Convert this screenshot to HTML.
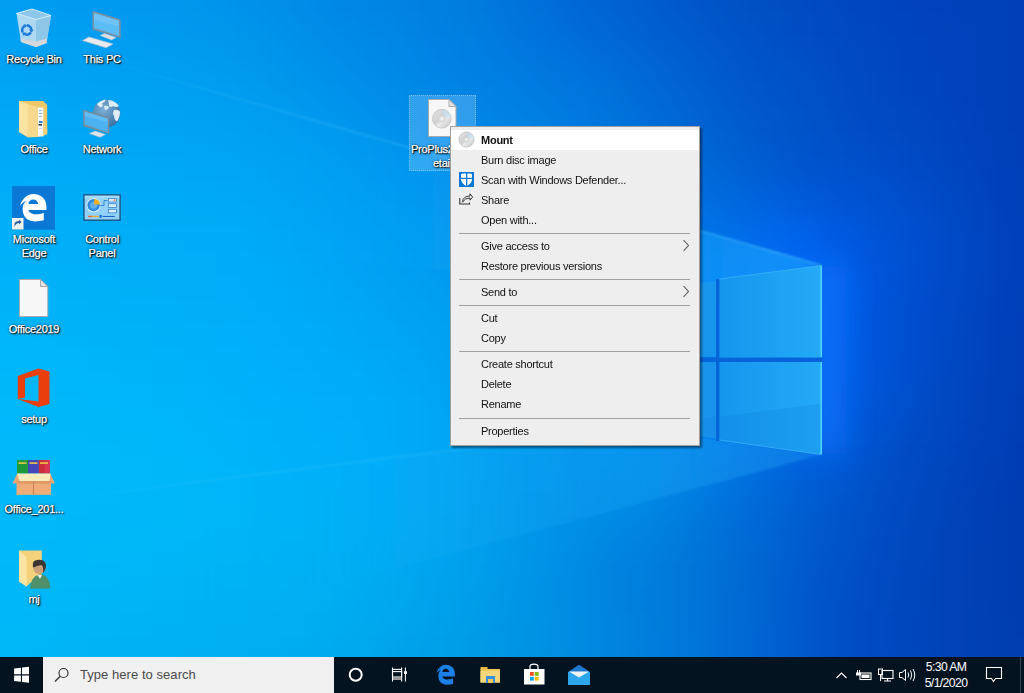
<!DOCTYPE html>
<html><head><meta charset="utf-8">
<style>
*{margin:0;padding:0;box-sizing:border-box}
html,body{width:1024px;height:693px;overflow:hidden;background:#0050c8}
body{position:relative;font-family:"Liberation Sans",sans-serif}
#wallwrap{position:absolute;left:0;top:0;width:1024px;height:657px;overflow:hidden}
#wall{position:absolute;left:0;top:0;width:1024px;height:657px}
#wf i{position:absolute;left:0;width:100%;height:12px;display:block}
.ic{position:absolute}
.lbl{position:absolute;color:#fff;font-size:11px;letter-spacing:-0.25px;text-align:center;line-height:14px;-webkit-text-stroke:0.25px #fff;
 text-shadow:1px 1px 1px #000,0 0 2px rgba(0,0,0,.85),1px 1px 3px rgba(0,0,0,.5)}
#menu{will-change:transform;position:absolute;left:450px;top:126px;width:250px;height:320px;background:#eeeeee;border:1px solid #a0a0a0;
 box-shadow:2px 2px 2px rgba(0,0,0,.45)}
.mi{position:absolute;left:0;width:248px;height:20px;font-size:11px;letter-spacing:-0.25px;color:#111;line-height:20px;padding-left:30px;white-space:nowrap}
.sep{position:absolute;left:8px;width:231px;height:1px;background:#a0a0a0}
.chev{position:absolute;right:10px;top:5px}
#task{position:absolute;left:0;top:657px;width:1024px;height:36px;background:#041320}
#search{position:absolute;left:43px;top:657px;width:291px;height:36px;background:#f0f0f0}
</style></head><body>
<div id="wallwrap">
<div id="wf" style="position:absolute;left:-24px;top:-24px;width:1072px;height:705px;filter:blur(6px)"><i style="top:0px;background:linear-gradient(90deg,#019ef2 0.0%,#019df1 3.0%,#009cf1 6.0%,#009bf0 9.0%,#009af0 11.9%,#0099ef 14.9%,#0097ee 17.9%,#0095ec 20.9%,#0093eb 23.9%,#0090e9 26.9%,#008ce8 29.9%,#0089e6 32.8%,#0086e5 35.8%,#0083e3 38.8%,#0080e1 41.8%,#007ddf 44.8%,#0078dd 47.8%,#0073da 50.7%,#006dd8 53.7%,#0067d5 56.7%,#0061d1 59.7%,#005dce 62.7%,#0058ca 65.7%,#0054c7 68.7%,#0050c4 71.6%,#004dc2 74.6%,#004ac1 77.6%,#0048bf 80.6%,#0046be 83.6%,#0044bd 86.6%,#0042bb 89.6%,#0041ba 92.5%,#003fb8 95.5%,#003eb6 98.5%)"></i><i style="top:12px;background:linear-gradient(90deg,#019ef2 0.0%,#019df1 3.0%,#009cf1 6.0%,#009bf0 9.0%,#009af0 11.9%,#0099ef 14.9%,#0097ee 17.9%,#0095ec 20.9%,#0093eb 23.9%,#0090e9 26.9%,#008ce8 29.9%,#0089e6 32.8%,#0086e5 35.8%,#0083e3 38.8%,#0080e1 41.8%,#007ddf 44.8%,#0078dd 47.8%,#0073da 50.7%,#006dd8 53.7%,#0067d5 56.7%,#0061d1 59.7%,#005dce 62.7%,#0058ca 65.7%,#0054c7 68.7%,#0050c4 71.6%,#004dc2 74.6%,#004ac1 77.6%,#0048bf 80.6%,#0046be 83.6%,#0044bd 86.6%,#0042bb 89.6%,#0041ba 92.5%,#003fb8 95.5%,#003eb6 98.5%)"></i><i style="top:24px;background:linear-gradient(90deg,#019ef2 0.0%,#019ef2 3.0%,#009cf1 6.0%,#009bf0 9.0%,#009af0 11.9%,#0099ef 14.9%,#0098ee 17.9%,#0096ed 20.9%,#0093eb 23.9%,#0090ea 26.9%,#008de8 29.9%,#0089e7 32.8%,#0086e5 35.8%,#0084e3 38.8%,#0081e1 41.8%,#007edf 44.8%,#0079dd 47.8%,#0073db 50.7%,#006dd8 53.7%,#0067d5 56.7%,#0062d2 59.7%,#005dce 62.7%,#0059cb 65.7%,#0055c7 68.7%,#0051c4 71.6%,#004ec2 74.6%,#004bc1 77.6%,#0048c0 80.6%,#0046be 83.6%,#0044bd 86.6%,#0042bb 89.6%,#0041ba 92.5%,#0040b8 95.5%,#003eb6 98.5%)"></i><i style="top:36px;background:linear-gradient(90deg,#019ff2 0.0%,#019ff2 3.0%,#009df1 6.0%,#009cf1 9.0%,#009bf0 11.9%,#009af0 14.9%,#0099ef 17.9%,#0097ed 20.9%,#0095ec 23.9%,#0092ea 26.9%,#008ee9 29.9%,#008ae7 32.8%,#0087e6 35.8%,#0085e4 38.8%,#0082e2 41.8%,#007ee0 44.8%,#007ade 47.8%,#0075dc 50.7%,#006fd9 53.7%,#0069d6 56.7%,#0063d3 59.7%,#005fcf 62.7%,#005acb 65.7%,#0056c8 68.7%,#0052c5 71.6%,#004fc3 74.6%,#004cc2 77.6%,#0049c0 80.6%,#0046bf 83.6%,#0044be 86.6%,#0043bc 89.6%,#0041ba 92.5%,#0040b8 95.5%,#003eb6 98.5%)"></i><i style="top:48px;background:linear-gradient(90deg,#01a0f3 0.0%,#01a0f2 3.0%,#009ff2 6.0%,#009ef1 9.0%,#009df1 11.9%,#009bf0 14.9%,#009aef 17.9%,#0098ee 20.9%,#0096ec 23.9%,#0093eb 26.9%,#008fe9 29.9%,#008ce8 32.8%,#0089e7 35.8%,#0086e5 38.8%,#0082e3 41.8%,#007fe1 44.8%,#007bdf 47.8%,#0076dd 50.7%,#0070da 53.7%,#006ad7 56.7%,#0065d4 59.7%,#0060d0 62.7%,#005ccc 65.7%,#0057c9 68.7%,#0053c6 71.6%,#004fc4 74.6%,#004cc3 77.6%,#0049c1 80.6%,#0047c0 83.6%,#0044be 86.6%,#0043bc 89.6%,#0042ba 92.5%,#0040b8 95.5%,#003eb6 98.5%)"></i><i style="top:60px;background:linear-gradient(90deg,#01a1f3 0.0%,#01a1f3 3.0%,#00a0f2 6.0%,#009ff2 9.0%,#009ef1 11.9%,#009df1 14.9%,#009bf0 17.9%,#009aee 20.9%,#0098ed 23.9%,#0095eb 26.9%,#0091ea 29.9%,#008de9 32.8%,#008ae7 35.8%,#0087e6 38.8%,#0083e4 41.8%,#0080e2 44.8%,#007ce0 47.8%,#0077de 50.7%,#0072db 53.7%,#006dd8 56.7%,#0067d5 59.7%,#0062d1 62.7%,#005dcd 65.7%,#0058ca 68.7%,#0054c7 71.6%,#0050c5 74.6%,#004dc4 77.6%,#004ac2 80.6%,#0047c0 83.6%,#0045bf 86.6%,#0043bd 89.6%,#0042bb 92.5%,#0040b8 95.5%,#003eb6 98.5%)"></i><i style="top:72px;background:linear-gradient(90deg,#01a2f3 0.0%,#00a2f3 3.0%,#00a1f3 6.0%,#00a0f2 9.0%,#009ff2 11.9%,#009ef1 14.9%,#009cf0 17.9%,#009bef 20.9%,#0099ed 23.9%,#0096ec 26.9%,#0092eb 29.9%,#008fea 32.8%,#008be8 35.8%,#0088e7 38.8%,#0084e5 41.8%,#0080e3 44.8%,#007de1 47.8%,#0079df 50.7%,#0074dc 53.7%,#006fda 56.7%,#006ad6 59.7%,#0064d2 62.7%,#005fce 65.7%,#005acb 68.7%,#0055c8 71.6%,#0051c6 74.6%,#004ec4 77.6%,#004bc3 80.6%,#0048c1 83.6%,#0045bf 86.6%,#0043bd 89.6%,#0042bb 92.5%,#0040b8 95.5%,#003eb6 98.5%)"></i><i style="top:84px;background:linear-gradient(90deg,#00a3f4 0.0%,#00a3f4 3.0%,#00a2f3 6.0%,#00a1f3 9.0%,#00a0f2 11.9%,#009ff2 14.9%,#009ef1 17.9%,#009cf0 20.9%,#009aee 23.9%,#0098ed 26.9%,#0094ec 29.9%,#0090ea 32.8%,#008ce9 35.8%,#0089e7 38.8%,#0085e5 41.8%,#0081e4 44.8%,#007ee2 47.8%,#007ae0 50.7%,#0076dd 53.7%,#0071db 56.7%,#006cd7 59.7%,#0066d3 62.7%,#0060cf 65.7%,#005bcc 68.7%,#0056c9 71.6%,#0052c7 74.6%,#004fc5 77.6%,#004bc3 80.6%,#0048c1 83.6%,#0045bf 86.6%,#0044bd 89.6%,#0042bb 92.5%,#0040b8 95.5%,#003eb6 98.5%)"></i><i style="top:96px;background:linear-gradient(90deg,#00a4f4 0.0%,#00a4f4 3.0%,#00a3f4 6.0%,#00a2f3 9.0%,#00a1f3 11.9%,#00a0f2 14.9%,#009ff1 17.9%,#009df0 20.9%,#009cef 23.9%,#0099ed 26.9%,#0095ec 29.9%,#0092eb 32.8%,#008eea 35.8%,#008ae8 38.8%,#0086e6 41.8%,#0083e4 44.8%,#007fe3 47.8%,#007ce1 50.7%,#0078de 53.7%,#0073dc 56.7%,#006ed8 59.7%,#0068d4 62.7%,#0062d0 65.7%,#005ccc 68.7%,#0057ca 71.6%,#0053c8 74.6%,#0050c6 77.6%,#004cc4 80.6%,#0049c2 83.6%,#0046c0 86.6%,#0044be 89.6%,#0042bb 92.5%,#0040b9 95.5%,#003eb6 98.5%)"></i><i style="top:108px;background:linear-gradient(90deg,#00a5f5 0.0%,#00a5f4 3.0%,#00a4f4 6.0%,#00a3f4 9.0%,#00a2f3 11.9%,#00a1f3 14.9%,#00a0f2 17.9%,#009ff1 20.9%,#009df0 23.9%,#009aee 26.9%,#0097ed 29.9%,#0093ec 32.8%,#008feb 35.8%,#008ce9 38.8%,#0088e7 41.8%,#0084e5 44.8%,#0081e4 47.8%,#007de2 50.7%,#0079df 53.7%,#0075dd 56.7%,#0070d9 59.7%,#0069d5 62.7%,#0063d1 65.7%,#005dcd 68.7%,#0058cb 71.6%,#0054c9 74.6%,#0050c7 77.6%,#004dc5 80.6%,#0049c3 83.6%,#0046c0 86.6%,#0044be 89.6%,#0042bb 92.5%,#0040b9 95.5%,#003eb6 98.5%)"></i><i style="top:120px;background:linear-gradient(90deg,#00a6f5 0.0%,#00a6f5 3.0%,#00a5f4 6.0%,#00a4f4 9.0%,#00a3f4 11.9%,#00a2f3 14.9%,#00a1f2 17.9%,#00a0f2 20.9%,#009ef0 23.9%,#009cef 26.9%,#0099ee 29.9%,#0095ed 32.8%,#0091ec 35.8%,#008dea 38.8%,#0089e8 41.8%,#0085e6 44.8%,#0082e4 47.8%,#007fe2 50.7%,#007be0 53.7%,#0077de 56.7%,#0071da 59.7%,#006bd6 62.7%,#0065d2 65.7%,#005fce 68.7%,#0059cb 71.6%,#0055c9 74.6%,#0051c8 77.6%,#004dc5 80.6%,#004ac3 83.6%,#0047c1 86.6%,#0045be 89.6%,#0042bc 92.5%,#0040b9 95.5%,#003eb7 98.5%)"></i><i style="top:132px;background:linear-gradient(90deg,#00a7f5 0.0%,#00a7f5 3.0%,#00a6f5 6.0%,#00a5f4 9.0%,#00a4f4 11.9%,#00a3f4 14.9%,#00a2f3 17.9%,#00a1f2 20.9%,#00a0f1 23.9%,#009df0 26.9%,#009aef 29.9%,#0096ee 32.8%,#0092ec 35.8%,#008eeb 38.8%,#008be9 41.8%,#0087e7 44.8%,#0084e5 47.8%,#0080e3 50.7%,#007ce1 53.7%,#0078df 56.7%,#0073db 59.7%,#006cd7 62.7%,#0066d3 65.7%,#0060cf 68.7%,#005acc 71.6%,#0056ca 74.6%,#0052c8 77.6%,#004ec6 80.6%,#004ac4 83.6%,#0048c2 86.6%,#0045bf 89.6%,#0043bc 92.5%,#0040b9 95.5%,#003eb7 98.5%)"></i><i style="top:144px;background:linear-gradient(90deg,#00a8f6 0.0%,#00a8f6 3.0%,#00a7f5 6.0%,#00a6f5 9.0%,#00a5f4 11.9%,#00a4f4 14.9%,#00a3f3 17.9%,#00a2f3 20.9%,#00a1f2 23.9%,#009ff1 26.9%,#009bf0 29.9%,#0098ef 32.8%,#0094ed 35.8%,#0090ec 38.8%,#008cea 41.8%,#0089e8 44.8%,#0085e6 47.8%,#0082e4 50.7%,#007ee2 53.7%,#0079e0 56.7%,#0074dc 59.7%,#006ed9 62.7%,#0067d5 65.7%,#0061d1 68.7%,#005cce 71.6%,#0057cb 74.6%,#0052c9 77.6%,#004ec7 80.6%,#004bc5 83.6%,#0048c2 86.6%,#0046c0 89.6%,#0043bc 92.5%,#0040b9 95.5%,#003eb7 98.5%)"></i><i style="top:156px;background:linear-gradient(90deg,#00a9f6 0.0%,#00a9f6 3.0%,#00a8f5 6.0%,#00a7f5 9.0%,#00a6f5 11.9%,#00a5f4 14.9%,#00a5f4 17.9%,#00a4f3 20.9%,#00a2f3 23.9%,#00a0f2 26.9%,#009df1 29.9%,#0099ef 32.8%,#0095ee 35.8%,#0092ec 38.8%,#008eeb 41.8%,#008ae9 44.8%,#0087e7 47.8%,#0083e5 50.7%,#007fe3 53.7%,#007be1 56.7%,#0076de 59.7%,#0070da 62.7%,#0069d6 65.7%,#0063d2 68.7%,#005dcf 71.6%,#0057cc 74.6%,#0053ca 77.6%,#004fc8 80.6%,#004cc6 83.6%,#0049c3 86.6%,#0046c0 89.6%,#0043bd 92.5%,#0041b9 95.5%,#003eb7 98.5%)"></i><i style="top:168px;background:linear-gradient(90deg,#00aaf6 0.0%,#00a9f6 3.0%,#00a9f6 6.0%,#00a8f5 9.0%,#00a7f5 11.9%,#00a7f5 14.9%,#00a6f4 17.9%,#00a5f4 20.9%,#00a3f3 23.9%,#00a1f2 26.9%,#009ef1 29.9%,#009bf0 32.8%,#0097ef 35.8%,#0093ed 38.8%,#008fec 41.8%,#008cea 44.8%,#0088e8 47.8%,#0085e6 50.7%,#0081e4 53.7%,#007ce2 56.7%,#0077df 59.7%,#0071db 62.7%,#006bd8 65.7%,#0064d4 68.7%,#005ed1 71.6%,#0058ce 74.6%,#0053cb 77.6%,#0050c9 80.6%,#004dc7 83.6%,#004ac5 86.6%,#0047c1 89.6%,#0044bd 92.5%,#0041ba 95.5%,#003eb7 98.5%)"></i><i style="top:180px;background:linear-gradient(90deg,#00abf7 0.0%,#00aaf6 3.0%,#00aaf6 6.0%,#00a9f6 9.0%,#00a8f5 11.9%,#00a8f5 14.9%,#00a7f5 17.9%,#00a6f4 20.9%,#00a5f4 23.9%,#00a3f3 26.9%,#00a0f2 29.9%,#009cf1 32.8%,#0098f0 35.8%,#0095ee 38.8%,#0091ec 41.8%,#008deb 44.8%,#008ae9 47.8%,#0086e7 50.7%,#0082e5 53.7%,#007ee3 56.7%,#0079e0 59.7%,#0073dd 62.7%,#006cda 65.7%,#0066d6 68.7%,#0060d3 71.6%,#005ad0 74.6%,#0054cd 77.6%,#0051cb 80.6%,#004dc9 83.6%,#004ac6 86.6%,#0047c2 89.6%,#0044be 92.5%,#0041ba 95.5%,#003eb7 98.5%)"></i><i style="top:192px;background:linear-gradient(90deg,#00abf7 0.0%,#00abf7 3.0%,#00aaf6 6.0%,#00aaf6 9.0%,#00a9f6 11.9%,#00a9f5 14.9%,#00a8f5 17.9%,#00a7f5 20.9%,#00a6f5 23.9%,#00a4f4 26.9%,#00a1f3 29.9%,#009ef2 32.8%,#009af1 35.8%,#0096ef 38.8%,#0092ed 41.8%,#008feb 44.8%,#008bea 47.8%,#0088e8 50.7%,#0084e6 53.7%,#007fe4 56.7%,#007ae2 59.7%,#0074df 62.7%,#006edc 65.7%,#0068d8 68.7%,#0062d5 71.6%,#005bd2 74.6%,#0056cf 77.6%,#0052ce 80.6%,#004ecb 83.6%,#004bc7 86.6%,#0048c3 89.6%,#0045bf 92.5%,#0041bb 95.5%,#003fb8 98.5%)"></i><i style="top:204px;background:linear-gradient(90deg,#00acf7 0.0%,#00acf7 3.0%,#00abf7 6.0%,#00abf6 9.0%,#00aaf6 11.9%,#00a9f6 14.9%,#00a9f6 17.9%,#00a8f5 20.9%,#00a7f5 23.9%,#00a5f5 26.9%,#00a2f4 29.9%,#009ff3 32.8%,#009bf1 35.8%,#0097f0 38.8%,#0094ee 41.8%,#0090ec 44.8%,#008dea 47.8%,#0089e9 50.7%,#0085e7 53.7%,#0081e5 56.7%,#007ce3 59.7%,#0076e1 62.7%,#0070de 65.7%,#006adb 68.7%,#0064d9 71.6%,#005dd6 74.6%,#0057d3 77.6%,#0053d1 80.6%,#0050cd 83.6%,#004cc9 86.6%,#0049c5 89.6%,#0045c0 92.5%,#0041bb 95.5%,#003fb8 98.5%)"></i><i style="top:216px;background:linear-gradient(90deg,#00adf7 0.0%,#00adf7 3.0%,#00acf7 6.0%,#00acf6 9.0%,#00abf6 11.9%,#00aaf6 14.9%,#00aaf6 17.9%,#00a9f6 20.9%,#00a8f6 23.9%,#00a6f5 26.9%,#00a3f4 29.9%,#00a0f3 32.8%,#009cf2 35.8%,#0099f0 38.8%,#0095ee 41.8%,#0092ed 44.8%,#008eeb 47.8%,#008ae9 50.7%,#0086e8 53.7%,#0082e6 56.7%,#007de4 59.7%,#0078e2 62.7%,#0072e0 65.7%,#006cde 68.7%,#0066dc 71.6%,#0060db 74.6%,#005ad8 77.6%,#0055d4 80.6%,#0051cf 83.6%,#004dcb 86.6%,#004ac6 89.6%,#0046c1 92.5%,#0041bb 95.5%,#003fb8 98.5%)"></i><i style="top:228px;background:linear-gradient(90deg,#00aef8 0.0%,#00aef8 3.0%,#00adf7 6.0%,#00acf7 9.0%,#00acf6 11.9%,#00abf6 14.9%,#00abf6 17.9%,#00aaf6 20.9%,#00a9f6 23.9%,#00a7f6 26.9%,#00a5f5 29.9%,#00a1f4 32.8%,#009ef3 35.8%,#009af1 38.8%,#0096ef 41.8%,#0093ed 44.8%,#008fec 47.8%,#008cea 50.7%,#0088e9 53.7%,#0084e8 56.7%,#007fe6 59.7%,#0079e4 62.7%,#0074e3 65.7%,#006ee1 68.7%,#0068e0 71.6%,#0062e0 74.6%,#005cdd 77.6%,#0057d8 80.6%,#0052d2 83.6%,#004ecc 86.6%,#004ac7 89.6%,#0046c1 92.5%,#0042bc 95.5%,#003fb8 98.5%)"></i><i style="top:240px;background:linear-gradient(90deg,#00aff8 0.0%,#00aff8 3.0%,#00aef7 6.0%,#00adf7 9.0%,#00adf7 11.9%,#00acf6 14.9%,#00abf6 17.9%,#00abf6 20.9%,#00aaf6 23.9%,#00a8f6 26.9%,#00a5f5 29.9%,#00a2f5 32.8%,#009ff3 35.8%,#009bf1 38.8%,#0098f0 41.8%,#0094ee 44.8%,#0091ec 47.8%,#008deb 50.7%,#0089ea 53.7%,#0085e9 56.7%,#0080e7 59.7%,#007be6 62.7%,#0076e5 65.7%,#0070e4 68.7%,#006ae4 71.6%,#0065e5 74.6%,#005fe3 77.6%,#0058dc 80.6%,#0053d4 83.6%,#004fce 86.6%,#004bc8 89.6%,#0047c2 92.5%,#0042bc 95.5%,#003fb9 98.5%)"></i><i style="top:252px;background:linear-gradient(90deg,#00aff8 0.0%,#00aff8 3.0%,#00aff8 6.0%,#00aef7 9.0%,#00adf7 11.9%,#00adf7 14.9%,#00acf7 17.9%,#00abf7 20.9%,#00abf7 23.9%,#00a9f6 26.9%,#00a6f6 29.9%,#00a3f5 32.8%,#00a0f4 35.8%,#009df2 38.8%,#0099f0 41.8%,#0096ee 44.8%,#0092ed 47.8%,#008eec 50.7%,#008beb 53.7%,#0086ea 56.7%,#0082e9 59.7%,#007de8 62.7%,#0077e8 65.7%,#0072e8 68.7%,#006ce8 71.6%,#0067ea 74.6%,#0061e8 77.6%,#005ae0 80.6%,#0054d7 83.6%,#004fd0 86.6%,#004cc9 89.6%,#0047c3 92.5%,#0042bd 95.5%,#003fb9 98.5%)"></i><i style="top:264px;background:linear-gradient(90deg,#00b0f8 0.0%,#00b0f8 3.0%,#00aff8 6.0%,#00aff7 9.0%,#00aef7 11.9%,#00adf7 14.9%,#00adf7 17.9%,#00acf7 20.9%,#00abf7 23.9%,#00a9f7 26.9%,#00a7f6 29.9%,#00a4f5 32.8%,#00a1f4 35.8%,#009ef2 38.8%,#009af0 41.8%,#0097ef 44.8%,#0093ed 47.8%,#0090ec 50.7%,#008cec 53.7%,#0088eb 56.7%,#0083ea 59.7%,#007eea 62.7%,#0079ea 65.7%,#0074ea 68.7%,#006eec 71.6%,#0069ee 74.6%,#0063ed 77.6%,#005be3 80.6%,#0055d9 83.6%,#0050d1 86.6%,#004cca 89.6%,#0047c3 92.5%,#0042bd 95.5%,#003fb9 98.5%)"></i><i style="top:276px;background:linear-gradient(90deg,#00b1f9 0.0%,#00b1f8 3.0%,#00b0f8 6.0%,#00aff8 9.0%,#00aff7 11.9%,#00aef7 14.9%,#00adf7 17.9%,#00adf7 20.9%,#00acf7 23.9%,#00aaf7 26.9%,#00a8f7 29.9%,#00a5f6 32.8%,#00a2f4 35.8%,#009ff3 38.8%,#009bf1 41.8%,#0098ef 44.8%,#0095ee 47.8%,#0091ed 50.7%,#008dec 53.7%,#0089ec 56.7%,#0085ec 59.7%,#0080ec 62.7%,#007aec 65.7%,#0075ed 68.7%,#0070ef 71.6%,#006af1 74.6%,#0064ef 77.6%,#005de5 80.6%,#0055da 83.6%,#0050d1 86.6%,#004cca 89.6%,#0047c3 92.5%,#0042bd 95.5%,#003fb9 98.5%)"></i><i style="top:288px;background:linear-gradient(90deg,#00b2f9 0.0%,#00b1f9 3.0%,#00b1f8 6.0%,#00b0f8 9.0%,#00aff7 11.9%,#00aff7 14.9%,#00aef7 17.9%,#00adf7 20.9%,#00acf7 23.9%,#00abf7 26.9%,#00a9f7 29.9%,#00a6f6 32.8%,#00a3f5 35.8%,#00a0f3 38.8%,#009cf1 41.8%,#0099ef 44.8%,#0096ee 47.8%,#0092ee 50.7%,#008eed 53.7%,#008aed 56.7%,#0086ed 59.7%,#0081ed 62.7%,#007cee 65.7%,#0077ef 68.7%,#0071f1 71.6%,#006bf3 74.6%,#0065f0 77.6%,#005de7 80.6%,#0056db 83.6%,#0050d2 86.6%,#004cca 89.6%,#0047c3 92.5%,#0042bd 95.5%,#003fb9 98.5%)"></i><i style="top:300px;background:linear-gradient(90deg,#00b2f9 0.0%,#00b2f9 3.0%,#00b1f8 6.0%,#00b1f8 9.0%,#00b0f8 11.9%,#00aff7 14.9%,#00aef7 17.9%,#00aef8 20.9%,#00adf8 23.9%,#00abf8 26.9%,#00a9f7 29.9%,#00a7f6 32.8%,#00a4f5 35.8%,#00a1f3 38.8%,#009ef1 41.8%,#009af0 44.8%,#0097ef 47.8%,#0093ee 50.7%,#0090ee 53.7%,#008cee 56.7%,#0087ee 59.7%,#0082ee 62.7%,#007def 65.7%,#0078f1 68.7%,#0072f3 71.6%,#006cf4 74.6%,#0066f1 77.6%,#005ee7 80.6%,#0056dc 83.6%,#0050d1 86.6%,#004bca 89.6%,#0047c3 92.5%,#0042bc 95.5%,#003fb8 98.5%)"></i><i style="top:312px;background:linear-gradient(90deg,#00b3f9 0.0%,#00b3f9 3.0%,#00b2f9 6.0%,#00b1f8 9.0%,#00b1f8 11.9%,#00b0f7 14.9%,#00aff7 17.9%,#00aef8 20.9%,#00adf8 23.9%,#00acf8 26.9%,#00aaf7 29.9%,#00a8f7 32.8%,#00a5f5 35.8%,#00a2f3 38.8%,#009ff1 41.8%,#009bf0 44.8%,#0098ef 47.8%,#0095ef 50.7%,#0091ee 53.7%,#008dee 56.7%,#0088ef 59.7%,#0084ef 62.7%,#007ef1 65.7%,#0079f2 68.7%,#0073f4 71.6%,#006df4 74.6%,#0066f0 77.6%,#005ee8 80.6%,#0056dc 83.6%,#004fd1 86.6%,#004bc9 89.6%,#0046c2 92.5%,#0042bc 95.5%,#003fb8 98.5%)"></i><i style="top:324px;background:linear-gradient(90deg,#00b4f9 0.0%,#00b3f9 3.0%,#00b3f9 6.0%,#00b2f8 9.0%,#00b1f8 11.9%,#00b0f8 14.9%,#00b0f8 17.9%,#00aff8 20.9%,#00aef8 23.9%,#00acf8 26.9%,#00aaf8 29.9%,#00a8f7 32.8%,#00a6f5 35.8%,#00a3f3 38.8%,#00a0f2 41.8%,#009cf0 44.8%,#0099f0 47.8%,#0096ef 50.7%,#0092ef 53.7%,#008eef 56.7%,#0089ef 59.7%,#0085f0 62.7%,#007ff1 65.7%,#007af3 68.7%,#0074f4 71.6%,#006df4 74.6%,#0066f0 77.6%,#005ee7 80.6%,#0056dc 83.6%,#004fd0 86.6%,#004ac9 89.6%,#0046c2 92.5%,#0042bc 95.5%,#003fb8 98.5%)"></i><i style="top:336px;background:linear-gradient(90deg,#00b4f9 0.0%,#00b4f9 3.0%,#00b3f9 6.0%,#00b3f9 9.0%,#00b2f8 11.9%,#00b1f8 14.9%,#00b0f8 17.9%,#00aff8 20.9%,#00aef8 23.9%,#00adf8 26.9%,#00abf8 29.9%,#00a9f7 32.8%,#00a7f6 35.8%,#00a4f4 38.8%,#00a1f2 41.8%,#009ef1 44.8%,#009af0 47.8%,#0097ef 50.7%,#0093ef 53.7%,#008fef 56.7%,#008af0 59.7%,#0086f1 62.7%,#0080f2 65.7%,#007bf3 68.7%,#0074f4 71.6%,#006df3 74.6%,#0066ef 77.6%,#005ee7 80.6%,#0056db 83.6%,#004fd0 86.6%,#004ac8 89.6%,#0046c1 92.5%,#0041bb 95.5%,#003eb7 98.5%)"></i><i style="top:348px;background:linear-gradient(90deg,#00b5fa 0.0%,#00b5fa 3.0%,#00b4f9 6.0%,#00b3f9 9.0%,#00b3f8 11.9%,#00b2f8 14.9%,#00b1f8 17.9%,#00b0f8 20.9%,#00aff9 23.9%,#00adf9 26.9%,#00acf8 29.9%,#00aaf7 32.8%,#00a7f6 35.8%,#00a5f4 38.8%,#00a2f3 41.8%,#009ff1 44.8%,#009bf0 47.8%,#0097f0 50.7%,#0094f0 53.7%,#0090f0 56.7%,#008bf0 59.7%,#0087f1 62.7%,#0081f2 65.7%,#007bf3 68.7%,#0075f4 71.6%,#006ef2 74.6%,#0066ee 77.6%,#005ee6 80.6%,#0056db 83.6%,#004fd0 86.6%,#004ac8 89.6%,#0046c1 92.5%,#0041bb 95.5%,#003eb7 98.5%)"></i><i style="top:360px;background:linear-gradient(90deg,#00b5fa 0.0%,#00b5fa 3.0%,#00b5f9 6.0%,#00b4f9 9.0%,#00b3f9 11.9%,#00b2f8 14.9%,#00b1f9 17.9%,#00b0f9 20.9%,#00aff9 23.9%,#00aef9 26.9%,#00acf8 29.9%,#00aaf8 32.8%,#00a8f6 35.8%,#00a6f5 38.8%,#00a3f3 41.8%,#00a0f2 44.8%,#009cf1 47.8%,#0098f0 50.7%,#0094f0 53.7%,#0090f0 56.7%,#008cf0 59.7%,#0087f1 62.7%,#0082f2 65.7%,#007cf3 68.7%,#0075f3 71.6%,#006ef1 74.6%,#0066ed 77.6%,#005de5 80.6%,#0056db 83.6%,#004fd0 86.6%,#004ac7 89.6%,#0046c0 92.5%,#0041ba 95.5%,#003eb7 98.5%)"></i><i style="top:372px;background:linear-gradient(90deg,#00b6fa 0.0%,#00b6fa 3.0%,#00b5f9 6.0%,#00b5f9 9.0%,#00b4f9 11.9%,#00b3f9 14.9%,#00b2f9 17.9%,#00b1f9 20.9%,#00b0f9 23.9%,#00aef9 26.9%,#00adf9 29.9%,#00abf8 32.8%,#00a9f7 35.8%,#00a7f5 38.8%,#00a4f4 41.8%,#00a0f2 44.8%,#009df1 47.8%,#0099f0 50.7%,#0095f0 53.7%,#0091f0 56.7%,#008df0 59.7%,#0088f1 62.7%,#0083f2 65.7%,#007cf2 68.7%,#0075f2 71.6%,#006df0 74.6%,#0065ec 77.6%,#005de4 80.6%,#0056da 83.6%,#004fd0 86.6%,#004ac7 89.6%,#0046c0 92.5%,#0041ba 95.5%,#003eb6 98.5%)"></i><i style="top:384px;background:linear-gradient(90deg,#00b6fa 0.0%,#00b6fa 3.0%,#00b6fa 6.0%,#00b5f9 9.0%,#00b4f9 11.9%,#00b4f9 14.9%,#00b3f9 17.9%,#00b2f9 20.9%,#00b0f9 23.9%,#00aff9 26.9%,#00adf9 29.9%,#00acf8 32.8%,#00aaf7 35.8%,#00a7f6 38.8%,#00a5f4 41.8%,#00a1f3 44.8%,#009df1 47.8%,#009af0 50.7%,#0096f0 53.7%,#0092f0 56.7%,#008ef0 59.7%,#0089f1 62.7%,#0083f1 65.7%,#007df1 68.7%,#0075f1 71.6%,#006def 74.6%,#0065ea 77.6%,#005de3 80.6%,#0055da 83.6%,#004fcf 86.6%,#004ac6 89.6%,#0046bf 92.5%,#0041b9 95.5%,#003eb6 98.5%)"></i><i style="top:396px;background:linear-gradient(90deg,#00b7fa 0.0%,#00b7fa 3.0%,#00b6fa 6.0%,#00b6fa 9.0%,#00b5f9 11.9%,#00b4f9 14.9%,#00b3f9 17.9%,#00b2f9 20.9%,#00b1fa 23.9%,#00aff9 26.9%,#00aef9 29.9%,#00acf8 32.8%,#00abf7 35.8%,#00a8f6 38.8%,#00a5f4 41.8%,#00a2f3 44.8%,#009ef1 47.8%,#009af0 50.7%,#0096f0 53.7%,#0092ef 56.7%,#008ef0 59.7%,#0089f0 62.7%,#0084f1 65.7%,#007df0 68.7%,#0075ef 71.6%,#006ded 74.6%,#0065e9 77.6%,#005de2 80.6%,#0055d9 83.6%,#004fce 86.6%,#004ac5 89.6%,#0045be 92.5%,#0041b9 95.5%,#003eb6 98.5%)"></i><i style="top:408px;background:linear-gradient(90deg,#00b7fa 0.0%,#00b7fa 3.0%,#00b7fa 6.0%,#00b6fa 9.0%,#00b6fa 11.9%,#00b5f9 14.9%,#00b4f9 17.9%,#00b3fa 20.9%,#00b1fa 23.9%,#00b0fa 26.9%,#00aef9 29.9%,#00adf9 32.8%,#00abf8 35.8%,#00a9f6 38.8%,#00a6f5 41.8%,#00a3f3 44.8%,#009ff1 47.8%,#009af0 50.7%,#0096ef 53.7%,#0093ef 56.7%,#008fef 59.7%,#008af0 62.7%,#0084f0 65.7%,#007def 68.7%,#0075ee 71.6%,#006deb 74.6%,#0064e7 77.6%,#005ce0 80.6%,#0055d8 83.6%,#004fcd 86.6%,#004ac4 89.6%,#0045be 92.5%,#0041b9 95.5%,#003eb5 98.5%)"></i><i style="top:420px;background:linear-gradient(90deg,#00b8fa 0.0%,#00b8fa 3.0%,#00b7fa 6.0%,#00b7fa 9.0%,#00b6fa 11.9%,#00b5fa 14.9%,#00b4fa 17.9%,#00b3fa 20.9%,#00b2fa 23.9%,#00b0fa 26.9%,#00aff9 29.9%,#00aef9 32.8%,#00acf8 35.8%,#00aaf7 38.8%,#00a7f5 41.8%,#00a3f3 44.8%,#009ff1 47.8%,#009bf0 50.7%,#0097ef 53.7%,#0093ee 56.7%,#008fef 59.7%,#008aef 62.7%,#0084ef 65.7%,#007dee 68.7%,#0075ec 71.6%,#006ce9 74.6%,#0064e5 77.6%,#005cde 80.6%,#0055d6 83.6%,#004fcc 86.6%,#004ac4 89.6%,#0045bd 92.5%,#0040b8 95.5%,#003db5 98.5%)"></i><i style="top:432px;background:linear-gradient(90deg,#00b8fb 0.0%,#00b8fa 3.0%,#00b7fa 6.0%,#00b7fa 9.0%,#00b7fa 11.9%,#00b6fa 14.9%,#00b5fa 17.9%,#00b4fa 20.9%,#00b2fa 23.9%,#00b1fa 26.9%,#00b0f9 29.9%,#00aef9 32.8%,#00acf8 35.8%,#00aaf7 38.8%,#00a7f5 41.8%,#00a3f3 44.8%,#009ff1 47.8%,#009bf0 50.7%,#0097ee 53.7%,#0093ee 56.7%,#008fee 59.7%,#008bee 62.7%,#0085ed 65.7%,#007dec 68.7%,#0074ea 71.6%,#006ce7 74.6%,#0063e2 77.6%,#005bdc 80.6%,#0054d4 83.6%,#004ecb 86.6%,#0049c3 89.6%,#0045bd 92.5%,#0040b8 95.5%,#003db5 98.5%)"></i><i style="top:444px;background:linear-gradient(90deg,#00b8fb 0.0%,#00b8fb 3.0%,#00b8fa 6.0%,#00b7fa 9.0%,#00b7fa 11.9%,#00b6fa 14.9%,#00b6fa 17.9%,#00b4fa 20.9%,#00b3fa 23.9%,#00b2fa 26.9%,#00b0f9 29.9%,#00aef9 32.8%,#00adf8 35.8%,#00aaf7 38.8%,#00a7f5 41.8%,#00a4f3 44.8%,#009ff1 47.8%,#009bef 50.7%,#0097ee 53.7%,#0093ed 56.7%,#008fed 59.7%,#008bed 62.7%,#0085ec 65.7%,#007dea 68.7%,#0074e8 71.6%,#006be5 74.6%,#0063e0 77.6%,#005bda 80.6%,#0053d2 83.6%,#004dc9 86.6%,#0049c2 89.6%,#0044bc 92.5%,#0040b8 95.5%,#003db4 98.5%)"></i><i style="top:456px;background:linear-gradient(90deg,#00b9fb 0.0%,#00b9fb 3.0%,#00b8fa 6.0%,#00b8fa 9.0%,#00b7fa 11.9%,#00b7fa 14.9%,#00b6fa 17.9%,#00b5fa 20.9%,#00b3fa 23.9%,#00b2fa 26.9%,#00b0f9 29.9%,#00aff9 32.8%,#00adf8 35.8%,#00aaf7 38.8%,#00a7f5 41.8%,#00a4f3 44.8%,#009ff1 47.8%,#009bef 50.7%,#0096ed 53.7%,#0092ec 56.7%,#008fec 59.7%,#008bec 62.7%,#0085eb 65.7%,#007ce8 68.7%,#0073e6 71.6%,#006ae2 74.6%,#0062de 77.6%,#005ad7 80.6%,#0053cf 83.6%,#004dc7 86.6%,#0048c1 89.6%,#0044bc 92.5%,#003fb7 95.5%,#003db4 98.5%)"></i><i style="top:468px;background:linear-gradient(90deg,#00b9fb 0.0%,#00b9fb 3.0%,#00b8fa 6.0%,#00b8fa 9.0%,#00b8fa 11.9%,#00b7fa 14.9%,#00b6fa 17.9%,#00b5fa 20.9%,#00b4fa 23.9%,#00b2f9 26.9%,#00b1f9 29.9%,#00aff9 32.8%,#00adf8 35.8%,#00abf7 38.8%,#00a7f5 41.8%,#00a4f3 44.8%,#009ff1 47.8%,#009bee 50.7%,#0096ec 53.7%,#0092eb 56.7%,#008feb 59.7%,#008beb 62.7%,#0084e9 65.7%,#007ce6 68.7%,#0073e3 71.6%,#006ae0 74.6%,#0061db 77.6%,#0059d5 80.6%,#0052cd 83.6%,#004cc5 86.6%,#0047c0 89.6%,#0043bb 92.5%,#003fb7 95.5%,#003cb4 98.5%)"></i><i style="top:480px;background:linear-gradient(90deg,#00b9fb 0.0%,#00b9fb 3.0%,#00b9fa 6.0%,#00b8fa 9.0%,#00b8fa 11.9%,#00b8fa 14.9%,#00b7fa 17.9%,#00b6fa 20.9%,#00b4f9 23.9%,#00b3f9 26.9%,#00b1f9 29.9%,#00aff8 32.8%,#00adf8 35.8%,#00abf7 38.8%,#00a7f5 41.8%,#00a4f3 44.8%,#009ff0 47.8%,#009aee 50.7%,#0096eb 53.7%,#0091ea 56.7%,#008fea 59.7%,#008be9 62.7%,#0084e7 65.7%,#007be4 68.7%,#0072e1 71.6%,#0069de 74.6%,#0060d9 77.6%,#0058d3 80.6%,#0051cb 83.6%,#004bc4 86.6%,#0047be 89.6%,#0043ba 92.5%,#003fb6 95.5%,#003cb3 98.5%)"></i><i style="top:492px;background:linear-gradient(90deg,#00b9fb 0.0%,#00b9fb 3.0%,#00b9fa 6.0%,#00b8fa 9.0%,#00b8fa 11.9%,#00b8fa 14.9%,#00b7fa 17.9%,#00b6f9 20.9%,#00b5f9 23.9%,#00b3f9 26.9%,#00b1f9 29.9%,#00b0f8 32.8%,#00adf7 35.8%,#00aaf6 38.8%,#00a7f5 41.8%,#00a3f2 44.8%,#009ff0 47.8%,#009aed 50.7%,#0095eb 53.7%,#0091e9 56.7%,#008ee9 59.7%,#008be8 62.7%,#0084e6 65.7%,#007ae2 68.7%,#0071df 71.6%,#0068db 74.6%,#005fd7 77.6%,#0058d0 80.6%,#0051c9 83.6%,#004bc2 86.6%,#0046bd 89.6%,#0042ba 92.5%,#003fb6 95.5%,#003cb3 98.5%)"></i><i style="top:504px;background:linear-gradient(90deg,#00b9fb 0.0%,#00b9fa 3.0%,#00b9fa 6.0%,#00b8fa 9.0%,#00b8fa 11.9%,#00b8fa 14.9%,#00b7fa 17.9%,#00b6f9 20.9%,#00b5f9 23.9%,#00b3f9 26.9%,#00b2f8 29.9%,#00b0f8 32.8%,#00adf7 35.8%,#00aaf6 38.8%,#00a7f4 41.8%,#00a3f2 44.8%,#009fef 47.8%,#009aed 50.7%,#0095ea 53.7%,#0090e8 56.7%,#008de8 59.7%,#008ae7 62.7%,#0082e4 65.7%,#0079e0 68.7%,#0070dd 71.6%,#0067d9 74.6%,#005ed4 77.6%,#0057cf 80.6%,#0050c8 83.6%,#004ac1 86.6%,#0046bd 89.6%,#0042b9 92.5%,#003eb5 95.5%,#003cb2 98.5%)"></i><i style="top:516px;background:linear-gradient(90deg,#00b9fb 0.0%,#00b9fa 3.0%,#00b9fa 6.0%,#00b8fa 9.0%,#00b8fa 11.9%,#00b8f9 14.9%,#00b7f9 17.9%,#00b6f9 20.9%,#00b5f9 23.9%,#00b3f8 26.9%,#00b2f8 29.9%,#00b0f7 32.8%,#00adf7 35.8%,#00aaf5 38.8%,#00a7f4 41.8%,#00a3f1 44.8%,#009eef 47.8%,#0099ec 50.7%,#0094e9 53.7%,#0090e7 56.7%,#008ce6 59.7%,#0088e5 62.7%,#0081e2 65.7%,#0077de 68.7%,#006edb 71.6%,#0066d7 74.6%,#005ed3 77.6%,#0056cd 80.6%,#004fc7 83.6%,#004ac1 86.6%,#0045bc 89.6%,#0042b8 92.5%,#003eb5 95.5%,#003cb2 98.5%)"></i><i style="top:528px;background:linear-gradient(90deg,#00b9fa 0.0%,#00b9fa 3.0%,#00b9fa 6.0%,#00b8fa 9.0%,#00b8f9 11.9%,#00b8f9 14.9%,#00b7f9 17.9%,#00b6f9 20.9%,#00b5f8 23.9%,#00b3f8 26.9%,#00b2f7 29.9%,#00b0f7 32.8%,#00adf6 35.8%,#00aaf5 38.8%,#00a7f3 41.8%,#00a3f1 44.8%,#009eee 47.8%,#0099eb 50.7%,#0094e9 53.7%,#008fe7 56.7%,#008be5 59.7%,#0086e3 62.7%,#007fe0 65.7%,#0076dc 68.7%,#006dd9 71.6%,#0065d5 74.6%,#005dd1 77.6%,#0055cc 80.6%,#004fc6 83.6%,#0049c0 86.6%,#0045bb 89.6%,#0041b8 92.5%,#003eb4 95.5%,#003cb2 98.5%)"></i><i style="top:540px;background:linear-gradient(90deg,#00b9fa 0.0%,#00b9fa 3.0%,#00b9fa 6.0%,#00b8f9 9.0%,#00b8f9 11.9%,#00b7f9 14.9%,#00b7f8 17.9%,#00b6f8 20.9%,#00b5f8 23.9%,#00b3f7 26.9%,#00b2f7 29.9%,#00b0f6 32.8%,#00adf5 35.8%,#00aaf4 38.8%,#00a6f2 41.8%,#00a2f0 44.8%,#009eed 47.8%,#0099eb 50.7%,#0093e8 53.7%,#008ee6 56.7%,#0089e4 59.7%,#0084e2 62.7%,#007dde 65.7%,#0074da 68.7%,#006cd7 71.6%,#0064d4 74.6%,#005ccf 77.6%,#0055ca 80.6%,#004ec5 83.6%,#0049bf 86.6%,#0045bb 89.6%,#0041b7 92.5%,#003eb4 95.5%,#003cb1 98.5%)"></i><i style="top:552px;background:linear-gradient(90deg,#00b9fa 0.0%,#00b9fa 3.0%,#00b8fa 6.0%,#00b8f9 9.0%,#00b8f9 11.9%,#00b7f8 14.9%,#00b6f8 17.9%,#00b5f8 20.9%,#00b4f7 23.9%,#00b3f7 26.9%,#00b2f6 29.9%,#00b0f5 32.8%,#00adf5 35.8%,#00aaf3 38.8%,#00a6f2 41.8%,#00a2ef 44.8%,#009eed 47.8%,#0098ea 50.7%,#0092e7 53.7%,#008de5 56.7%,#0087e3 59.7%,#0082e0 62.7%,#007bdc 65.7%,#0073d9 68.7%,#006bd6 71.6%,#0063d2 74.6%,#005bce 77.6%,#0054c9 80.6%,#004ec4 83.6%,#0048bf 86.6%,#0044ba 89.6%,#0041b7 92.5%,#003eb3 95.5%,#003cb1 98.5%)"></i><i style="top:564px;background:linear-gradient(90deg,#00b9fa 0.0%,#00b9fa 3.0%,#00b8f9 6.0%,#00b8f9 9.0%,#00b7f8 11.9%,#00b7f8 14.9%,#00b6f8 17.9%,#00b5f7 20.9%,#00b4f7 23.9%,#00b3f6 26.9%,#00b2f5 29.9%,#00b0f5 32.8%,#00adf4 35.8%,#00a9f3 38.8%,#00a6f1 41.8%,#00a2ef 44.8%,#009dec 47.8%,#0098e9 50.7%,#0092e7 53.7%,#008ce4 56.7%,#0086e2 59.7%,#0080df 62.7%,#007adb 65.7%,#0072d8 68.7%,#006bd5 71.6%,#0063d1 74.6%,#005bcd 77.6%,#0053c8 80.6%,#004dc3 83.6%,#0048be 86.6%,#0044ba 89.6%,#0041b7 92.5%,#003eb3 95.5%,#003cb1 98.5%)"></i><i style="top:576px;background:linear-gradient(90deg,#00b9fa 0.0%,#00b9fa 3.0%,#00b8f9 6.0%,#00b7f9 9.0%,#00b7f8 11.9%,#00b6f8 14.9%,#00b5f7 17.9%,#00b5f6 20.9%,#00b4f6 23.9%,#00b3f5 26.9%,#00b1f5 29.9%,#00aff4 32.8%,#00acf3 35.8%,#00a9f2 38.8%,#00a5f0 41.8%,#00a1ee 44.8%,#009deb 47.8%,#0097e9 50.7%,#0091e6 53.7%,#008be3 56.7%,#0084e1 59.7%,#007fde 62.7%,#0079db 65.7%,#0072d7 68.7%,#006ad4 71.6%,#0062d0 74.6%,#005acc 77.6%,#0053c7 80.6%,#004cc3 83.6%,#0048be 86.6%,#0044ba 89.6%,#0041b6 92.5%,#003eb3 95.5%,#003cb1 98.5%)"></i><i style="top:588px;background:linear-gradient(90deg,#00b9fa 0.0%,#00b8f9 3.0%,#00b8f9 6.0%,#00b7f8 9.0%,#00b6f8 11.9%,#00b6f7 14.9%,#00b5f7 17.9%,#00b4f6 20.9%,#00b3f5 23.9%,#00b2f5 26.9%,#00b1f4 29.9%,#00aff3 32.8%,#00acf2 35.8%,#00a9f1 38.8%,#00a5ef 41.8%,#00a1ed 44.8%,#009ceb 47.8%,#0097e8 50.7%,#0091e5 53.7%,#008ae3 56.7%,#0083e0 59.7%,#007edd 62.7%,#0078da 65.7%,#0071d6 68.7%,#006ad3 71.6%,#0062d0 74.6%,#0059cb 77.6%,#0052c7 80.6%,#004cc2 83.6%,#0047be 86.6%,#0044ba 89.6%,#0041b6 92.5%,#003eb3 95.5%,#003cb0 98.5%)"></i><i style="top:600px;background:linear-gradient(90deg,#00b8f9 0.0%,#00b8f9 3.0%,#00b7f9 6.0%,#00b7f8 9.0%,#00b6f7 11.9%,#00b5f7 14.9%,#00b4f6 17.9%,#00b3f5 20.9%,#00b3f5 23.9%,#00b2f4 26.9%,#00b0f3 29.9%,#00aef3 32.8%,#00acf1 35.8%,#00a8f0 38.8%,#00a4ee 41.8%,#00a0ec 44.8%,#009cea 47.8%,#0096e7 50.7%,#0090e5 53.7%,#008ae2 56.7%,#0083df 59.7%,#007edd 62.7%,#0078da 65.7%,#0071d6 68.7%,#006ad3 71.6%,#0061cf 74.6%,#0059cb 77.6%,#0051c6 80.6%,#004bc2 83.6%,#0047bd 86.6%,#0044b9 89.6%,#0041b6 92.5%,#003eb3 95.5%,#003cb0 98.5%)"></i><i style="top:612px;background:linear-gradient(90deg,#00b8f9 0.0%,#00b8f9 3.0%,#00b7f8 6.0%,#00b6f8 9.0%,#00b5f7 11.9%,#00b5f6 14.9%,#00b4f5 17.9%,#00b3f5 20.9%,#00b2f4 23.9%,#00b1f3 26.9%,#00b0f3 29.9%,#00aef2 32.8%,#00abf1 35.8%,#00a8ef 38.8%,#00a4ed 41.8%,#00a0eb 44.8%,#009be9 47.8%,#0096e7 50.7%,#0090e4 53.7%,#008ae2 56.7%,#0083df 59.7%,#007ddc 62.7%,#0078da 65.7%,#0071d6 68.7%,#0069d3 71.6%,#0061cf 74.6%,#0058cb 77.6%,#0051c6 80.6%,#004bc1 83.6%,#0047bd 86.6%,#0044b9 89.6%,#0041b6 92.5%,#003eb3 95.5%,#003cb0 98.5%)"></i><i style="top:624px;background:linear-gradient(90deg,#00b8f9 0.0%,#00b8f9 3.0%,#00b7f8 6.0%,#00b6f7 9.0%,#00b5f6 11.9%,#00b4f6 14.9%,#00b3f5 17.9%,#00b2f4 20.9%,#00b1f3 23.9%,#00b0f3 26.9%,#00aff2 29.9%,#00adf1 32.8%,#00aaf0 35.8%,#00a7ee 38.8%,#00a3ed 41.8%,#009feb 44.8%,#009be8 47.8%,#0096e6 50.7%,#0090e4 53.7%,#008ae1 56.7%,#0083df 59.7%,#007ddc 62.7%,#0078da 65.7%,#0071d7 68.7%,#0069d3 71.6%,#0061cf 74.6%,#0058ca 77.6%,#0050c5 80.6%,#004bc1 83.6%,#0047bd 86.6%,#0044b9 89.6%,#0041b6 92.5%,#003eb2 95.5%,#003cb0 98.5%)"></i><i style="top:636px;background:linear-gradient(90deg,#00b8f9 0.0%,#00b7f9 3.0%,#00b6f8 6.0%,#00b5f7 9.0%,#00b4f6 11.9%,#00b3f5 14.9%,#00b3f4 17.9%,#00b2f4 20.9%,#00b1f3 23.9%,#00b0f2 26.9%,#00aef1 29.9%,#00acf0 32.8%,#00aaef 35.8%,#00a6ee 38.8%,#00a3ec 41.8%,#009fea 44.8%,#009ae8 47.8%,#0096e6 50.7%,#0090e3 53.7%,#008ae1 56.7%,#0084df 59.7%,#007edc 62.7%,#0078da 65.7%,#0071d7 68.7%,#0069d3 71.6%,#0061cf 74.6%,#0058ca 77.6%,#0050c5 80.6%,#004ac1 83.6%,#0046bd 86.6%,#0044b9 89.6%,#0041b6 92.5%,#003fb2 95.5%,#003cb0 98.5%)"></i><i style="top:648px;background:linear-gradient(90deg,#00b8f8 0.0%,#00b7f8 3.0%,#00b6f7 6.0%,#00b5f7 9.0%,#00b4f6 11.9%,#00b3f5 14.9%,#00b2f4 17.9%,#00b1f3 20.9%,#00b0f2 23.9%,#00aff2 26.9%,#00aef1 29.9%,#00acf0 32.8%,#00a9ee 35.8%,#00a6ed 38.8%,#00a2eb 41.8%,#009ee9 44.8%,#009ae7 47.8%,#0095e5 50.7%,#0090e3 53.7%,#008ae1 56.7%,#0084df 59.7%,#007edc 62.7%,#0078da 65.7%,#0071d8 68.7%,#0069d4 71.6%,#0060cf 74.6%,#0058ca 77.6%,#0050c5 80.6%,#004ac1 83.6%,#0046bd 86.6%,#0044b9 89.6%,#0041b6 92.5%,#003fb2 95.5%,#003cb0 98.5%)"></i><i style="top:660px;background:linear-gradient(90deg,#00b7f8 0.0%,#00b7f8 3.0%,#00b6f7 6.0%,#00b4f6 9.0%,#00b3f5 11.9%,#00b2f4 14.9%,#00b2f4 17.9%,#00b1f3 20.9%,#00b0f2 23.9%,#00aff1 26.9%,#00adf0 29.9%,#00abef 32.8%,#00a8ee 35.8%,#00a5ec 38.8%,#00a1ea 41.8%,#009de8 44.8%,#0099e7 47.8%,#0095e5 50.7%,#0090e3 53.7%,#008ae1 56.7%,#0084df 59.7%,#007edd 62.7%,#0078db 65.7%,#0071d8 68.7%,#0069d4 71.6%,#0060cf 74.6%,#0058ca 77.6%,#0050c5 80.6%,#004ac1 83.6%,#0046bd 86.6%,#0044b9 89.6%,#0041b6 92.5%,#003fb2 95.5%,#003db0 98.5%)"></i><i style="top:672px;background:linear-gradient(90deg,#00b7f8 0.0%,#00b7f8 3.0%,#00b5f7 6.0%,#00b4f6 9.0%,#00b3f5 11.9%,#00b2f4 14.9%,#00b1f3 17.9%,#00b0f2 20.9%,#00aff1 23.9%,#00aef0 26.9%,#00acef 29.9%,#00aaee 32.8%,#00a8ed 35.8%,#00a4eb 38.8%,#00a1ea 41.8%,#009de8 44.8%,#0099e6 47.8%,#0095e4 50.7%,#0090e2 53.7%,#008ae0 56.7%,#0084de 59.7%,#007edd 62.7%,#0078db 65.7%,#0071d8 68.7%,#0069d4 71.6%,#0060cf 74.6%,#0058ca 77.6%,#0050c5 80.6%,#004ac1 83.6%,#0047bd 86.6%,#0044b9 89.6%,#0041b6 92.5%,#003fb2 95.5%,#003db0 98.5%)"></i><i style="top:684px;background:linear-gradient(90deg,#00b7f8 0.0%,#00b7f8 3.0%,#00b5f7 6.0%,#00b4f6 9.0%,#00b3f5 11.9%,#00b2f4 14.9%,#00b1f3 17.9%,#00b0f2 20.9%,#00aff1 23.9%,#00aef0 26.9%,#00acef 29.9%,#00aaee 32.8%,#00a8ed 35.8%,#00a4eb 38.8%,#00a1ea 41.8%,#009de8 44.8%,#0099e6 47.8%,#0095e4 50.7%,#0090e2 53.7%,#008ae0 56.7%,#0084de 59.7%,#007edd 62.7%,#0078db 65.7%,#0071d8 68.7%,#0069d4 71.6%,#0060cf 74.6%,#0058ca 77.6%,#0050c5 80.6%,#004ac1 83.6%,#0047bd 86.6%,#0044b9 89.6%,#0041b6 92.5%,#003fb2 95.5%,#003db0 98.5%)"></i><i style="top:696px;background:linear-gradient(90deg,#00b7f8 0.0%,#00b7f8 3.0%,#00b5f7 6.0%,#00b4f6 9.0%,#00b3f5 11.9%,#00b2f4 14.9%,#00b1f3 17.9%,#00b0f2 20.9%,#00aff1 23.9%,#00aef0 26.9%,#00acef 29.9%,#00aaee 32.8%,#00a8ed 35.8%,#00a4eb 38.8%,#00a1ea 41.8%,#009de8 44.8%,#0099e6 47.8%,#0095e4 50.7%,#0090e2 53.7%,#008ae0 56.7%,#0084de 59.7%,#007edd 62.7%,#0078db 65.7%,#0071d8 68.7%,#0069d4 71.6%,#0060cf 74.6%,#0058ca 77.6%,#0050c5 80.6%,#004ac1 83.6%,#0047bd 86.6%,#0044b9 89.6%,#0041b6 92.5%,#003fb2 95.5%,#003db0 98.5%)"></i></div>
<svg id="wall" width="1024" height="657" viewBox="0 0 1024 657">
 <defs>
  <filter id="blur8"><feGaussianBlur stdDeviation="8"/></filter>
 </defs>
 <!-- beams -->
 <defs>
  <linearGradient id="bu" gradientUnits="userSpaceOnUse" x1="821" y1="0" x2="250" y2="0">
   <stop offset="0" stop-color="#20b0ff" stop-opacity=".6"/>
   <stop offset=".25" stop-color="#20b0ff" stop-opacity=".35"/>
   <stop offset="1" stop-color="#20b0ff" stop-opacity="0"/>
  </linearGradient>
  <linearGradient id="bl" gradientUnits="userSpaceOnUse" x1="821" y1="0" x2="200" y2="0">
   <stop offset="0" stop-color="#30b8ff" stop-opacity=".3"/>
   <stop offset=".4" stop-color="#30b8ff" stop-opacity=".15"/>
   <stop offset="1" stop-color="#30b8ff" stop-opacity="0"/>
  </linearGradient>
  <linearGradient id="bline" gradientUnits="userSpaceOnUse" x1="821" y1="0" x2="0" y2="0">
   <stop offset="0" stop-color="#60d0ff" stop-opacity=".5"/>
   <stop offset=".6" stop-color="#60d0ff" stop-opacity=".3"/>
   <stop offset=".85" stop-color="#60d0ff" stop-opacity=".08"/>
   <stop offset="1" stop-color="#60d0ff" stop-opacity="0"/>
  </linearGradient>
  <linearGradient id="bline2" gradientUnits="userSpaceOnUse" x1="660" y1="0" x2="0" y2="0">
   <stop offset="0" stop-color="#60d0ff" stop-opacity=".3"/>
   <stop offset=".7" stop-color="#60d0ff" stop-opacity=".2"/>
   <stop offset="1" stop-color="#60d0ff" stop-opacity="0"/>
  </linearGradient>
  <filter id="b1"><feGaussianBlur stdDeviation="1.2"/></filter>
  <filter id="b3"><feGaussianBlur stdDeviation="3"/></filter>
 </defs>
 <polygon points="0,30.7 821.7,265.3 660,289 0,230" fill="url(#bu)" filter="url(#b1)"/>
 <polygon points="821.7,454.8 660,432 660,424 0,507 0,674" fill="url(#bl)" filter="url(#b1)"/>
 <line x1="0" y1="30.7" x2="821.7" y2="265.3" stroke="url(#bline)" stroke-width="1.5" filter="url(#b1)"/>
 <line x1="0" y1="507" x2="660" y2="424" stroke="url(#bline2)" stroke-width="1.5" filter="url(#b1)"/>
 <!-- window panes -->
 <defs>
  <linearGradient id="pg" x1="0" y1="0" x2="1" y2="0">
   <stop offset="0" stop-color="#1596ee"/>
   <stop offset="1" stop-color="#24aaf6"/>
  </linearGradient>
  <filter id="gl" x="-100%" y="-50%" width="300%" height="200%"><feGaussianBlur stdDeviation="14"/></filter>
  <filter id="gl2" x="-50%" y="-50%" width="200%" height="200%"><feGaussianBlur stdDeviation="2.5"/></filter>
 </defs>
 <rect x="806" y="266" width="40" height="188" fill="#0a70fa" opacity=".8" filter="url(#gl)"/>
 <rect x="716" y="279" width="3.5" height="162" fill="#0862d6" opacity=".85"/>
 <rect x="660" y="357.4" width="161.7" height="4.6" fill="#0862d6" opacity=".85"/>
 <polygon points="660,289 716,280.5 716,357 660,357" fill="#1896ee"/>
 <polygon points="719.5,279 821.7,265.3 821.7,357.4 719.5,357.4" fill="url(#pg)"/>
 <polygon points="660,362 716,362 716,438.5 660,432" fill="#1894ec"/>
 <polygon points="719.5,362 821.7,362 821.7,454.8 719.5,440" fill="url(#pg)"/>
 <polygon points="719.5,416.7 821.7,403.7 821.7,454.8 719.5,440" fill="#0a80e0" opacity=".25"/>
 <polygon points="660,424 716,417 716,438.5 660,432" fill="#0a80e0" opacity=".25"/>
 <line x1="821.2" y1="266" x2="821.2" y2="357" stroke="#5ae4ff" stroke-width="1.4" opacity=".9"/>
 <line x1="821.2" y1="362" x2="821.2" y2="454" stroke="#5ae4ff" stroke-width="1.4" opacity=".9"/>
 <line x1="821.2" y1="266" x2="821.2" y2="454" stroke="#40c0ff" stroke-width="4" opacity=".5" filter="url(#gl2)"/>
 <line x1="719.5" y1="279" x2="821.7" y2="265.3" stroke="#50c8ff" stroke-width="1" opacity=".5"/>
 <line x1="719.5" y1="440" x2="821.7" y2="454.8" stroke="#50c8ff" stroke-width="1" opacity=".5"/>
</svg>
</div>


<!-- desktop icons -->
<svg class="ic" style="left:0;top:0" width="140" height="620" viewBox="0 0 140 620">
 <!-- Recycle bin -->
 <polygon points="16.5,13.5 21,42 36,47 46.5,43 51,15.5 36,19.5" fill="#acd8f2"/>
 <polygon points="36,19.5 51,15.5 46.5,43 36,47" fill="#8ec6e8"/>
 <polygon points="16.5,13.5 32,9 51,15.5 36,19.5" fill="#8cc6ea" stroke="#d8eefa" stroke-width="1"/>
 <polygon points="20.4,38.5 21,42 36,47 46.5,43 47.2,38.5 36,41.5" fill="#d4d8da"/>
 <g fill="none" stroke="#1a7ad6" stroke-width="2.6"><path d="M26.96,25.40 A4.6,4.6 0 0 1 31.40,30.00" /><polygon points="31.05,32.82 33.65,30.15 29.29,29.54" fill="#1a7ad6" stroke="none"/><path d="M30.70,32.44 A4.6,4.6 0 0 1 24.50,33.98" /><polygon points="22.23,32.27 23.24,35.85 25.95,32.38" fill="#1a7ad6" stroke="none"/><path d="M22.74,32.16 A4.6,4.6 0 0 1 24.50,26.02" /><polygon points="27.12,24.91 23.51,23.99 25.16,28.07" fill="#1a7ad6" stroke="none"/></g>
 <!-- This PC -->
 <polygon points="92.5,10.8 120.6,19.5 120.6,38 92.5,29.5" fill="#7b8fa0"/>
 <polygon points="94,13 119,20.8 119,36 94,28" fill="#5cbcf6"/>
 <polygon points="94,13 119,20.8 119,26 94,20" fill="#7cc8f8" opacity=".6"/>
 <polygon points="100,35.5 104.5,33.5 116,37.5 111.5,40" fill="#dde3e8" stroke="#b8c0c6" stroke-width=".5"/>
 <polygon points="82.5,40.5 89,37 113,44 106,47.8" fill="#e6eaee" stroke="#b8c0c6" stroke-width=".6"/>
 <!-- Office folder -->
 <polygon points="19.1,101 43,101 47.2,105 47.2,134 37.8,137 27.9,137.3 19.1,132" fill="#ecc868"/>
 <rect x="37.8" y="107.5" width="5.6" height="29" fill="#f6f8fa"/>
 <rect x="39" y="110" width="3.5" height=".8" fill="#7ab0e0"/>
 <rect x="39" y="113" width="3.5" height=".8" fill="#7ab0e0"/>
 <rect x="39" y="116" width="3" height=".8" fill="#7ab0e0"/>
 <rect x="39" y="121" width="3.5" height="2" fill="#3a7cc8"/>
 <rect x="38.5" y="124" width="3.5" height="1.6" fill="#2a3a48"/>
 <rect x="39" y="128" width="3.5" height=".8" fill="#c8d0d8"/>
 <polygon points="43.4,124 47.2,126.5 47.2,134 43.4,136" fill="#f2cf78"/>
 <polygon points="27.9,104 37.8,107 37.8,137 27.9,137.3" fill="#f6d98c"/>
 <polygon points="19.1,101 27.9,104 27.9,137.3 19.1,132" fill="#fbe3a2"/>
 <!-- Network -->
 <defs><radialGradient id="gb" cx=".4" cy=".35" r=".7"><stop offset="0" stop-color="#7eb0d8"/><stop offset="1" stop-color="#3a6e9e"/></radialGradient></defs>
 <circle cx="106.5" cy="113.5" r="13.8" fill="url(#gb)"/>
 <path d="M97,104 q4,-4 9,-4.5 q-1,3 -4,4 q2,2 -1,4 q-3,-1 -4,-3.5z M108,100 q7,0.5 11,6 q-3,2 -6,0 q-2,2 -4,0 q0,-3 -1,-6z M114,110 q4,-1 6,1.5 q0,6 -3,10 q-3,-2 -3,-6 q-2,-2 0,-5.5z M104,106 q3,-1 5,1 q-1,3 -4,3z" fill="#dcecf6"/>
 <polygon points="83.2,109.7 109.2,117.3 109.2,133.8 83.2,126.2" fill="#7b8a96"/>
 <polygon points="84.6,111.6 107.8,118.4 107.8,132.2 84.6,124.6" fill="#4db2f2"/>
 <polygon points="84.6,111.6 107.8,118.4 107.8,122 84.6,116" fill="#78c8f8" opacity=".5"/>
 <polygon points="89.5,133.5 95,131 105.5,134.5 100,137.2" fill="#dde3e8" stroke="#b8c0c6" stroke-width=".5"/>
 <!-- Edge tile -->
 <rect x="12.1" y="186.1" width="42.9" height="43.6" fill="#0a78d4"/>
 <path transform="translate(20,194) scale(26.4,27.4)" fill-rule="evenodd" fill="#fff" d="M0,0.43 C0.08,0.15 0.3,0 0.5,0 C0.8,0 1,0.18 1,0.45 L1,0.584 L0.32,0.584 C0.34,0.68 0.45,0.74 0.6,0.74 C0.72,0.74 0.83,0.72 0.9,0.68 L0.9,0.96 C0.8,0.99 0.68,1 0.56,1 C0.28,1 0.1,0.82 0.1,0.55 C0.1,0.42 0.15,0.33 0.24,0.26 C0.13,0.29 0.05,0.36 0,0.43 Z M0.32,0.365 C0.33,0.26 0.4,0.2 0.5,0.2 C0.6,0.2 0.68,0.27 0.69,0.365 Z"/>
 <rect x="12" y="218" width="11.5" height="11.5" fill="#f0f0f0"/>
 <path d="M14.5,227 L14.5,224 Q15,221 19,221 L19,219.5 L21.5,222 L19,224.5 L19,223 Q16,223 14.5,227Z" fill="#2b5f9e"/>
 <!-- Control Panel -->
 <rect x="83.3" y="194.3" width="37.4" height="26.5" fill="#1f4c78"/>
 <rect x="84.6" y="195.6" width="34.8" height="23.9" fill="#92d2f8"/>
 <rect x="84.6" y="195.6" width="34.8" height="3" fill="#b4e0fa" opacity=".6"/>
 <circle cx="93.6" cy="205.2" r="7" fill="#e8f6fe"/>
 <circle cx="93.6" cy="205.2" r="6.2" fill="#2c8ae0"/>
 <circle cx="93.6" cy="205.2" r="3.5" fill="#62b0ee"/>
 <path d="M94.2,204.6 L94.2,199 A6,6 0 0 1 99.8,204.6Z" fill="#f2b01e"/>
 <path d="M100,205.5 L104,205.5 L104,200.5 L107.5,200.5" fill="none" stroke="#2a78c8" stroke-width=".8"/>
 <rect x="108.3" y="198.4" width="8.2" height="3.6" fill="#d6effc" stroke="#2a74c8" stroke-width=".7"/>
 <rect x="108.3" y="203.8" width="8.2" height="3.6" fill="#d6effc" stroke="#2a74c8" stroke-width=".7"/>
 <rect x="108.3" y="209.3" width="8.2" height="3.6" fill="#d6effc" stroke="#2a74c8" stroke-width=".7"/>
 <circle cx="114.5" cy="200.2" r=".9" fill="#f08030"/>
 <rect x="88" y="215.8" width="11" height="1.3" fill="#f0a828"/>
 <rect x="88" y="215.8" width="4" height="1.3" fill="#e86838"/>
 <rect x="99.5" y="214.8" width="2.2" height="3" fill="#1a6cd0"/>
 <rect x="102.7" y="215.9" width="12.1" height="1.1" fill="#1a64c8"/>
 <!-- Office2019 blank doc -->
 <path d="M19.5,279.5 L40.5,279.5 L47.8,286.5 L47.8,316.5 L19.5,316.5Z" fill="#f7f7f7" stroke="#a9a9a9" stroke-width="1"/>
 <path d="M40.5,279.5 L40.5,286.5 L47.8,286.5Z" fill="#e4e4e4" stroke="#a9a9a9" stroke-width="1"/>
 <!-- setup office logo -->
 <path d="M17.8,376 L38.5,368.5 L49.5,371.5 L49.5,404 L38.5,407 L17.8,399 L38.5,401.5 L38.5,375 L25,378.5 L25,397.5 L17.8,399Z" fill="#ea3e0c"/>
 <!-- Office_201 winrar box -->
 <rect x="17" y="460" width="11" height="13.5" fill="#1e9a3c"/>
 <rect x="28" y="460" width="10.8" height="13.5" fill="#4448b8"/>
 <rect x="38.8" y="460" width="11" height="13.5" fill="#cc2c3c"/>
 <rect x="44.5" y="460" width="5.3" height="13.5" fill="#e03858" opacity=".7"/>
 <rect x="18.5" y="462.3" width="8" height="1.6" fill="#e8c848"/>
 <rect x="29.5" y="462.3" width="8" height="1.6" fill="#e8c848"/>
 <rect x="40" y="462.3" width="8" height="1.6" fill="#e8c848"/>
 <polygon points="12.5,483.5 17,474 50.5,474 55,483.5" fill="#e9a878"/>
 <polygon points="17,473.5 50.5,473.5 49.5,481 19.5,481" fill="#fcecbc"/>
 <rect x="16.5" y="481" width="34.5" height="13.8" fill="#f0ac78"/>
 <rect x="16.5" y="481" width="34.5" height="2.5" fill="#d89060" opacity=".7"/>
 <rect x="33" y="481" width="1" height="13.8" fill="#c48058"/>
 <!-- mj folder -->
 <polygon points="19.1,550.4 41.8,550.4 41.8,581 30,583 26.6,586.4 19.1,581.6" fill="#f4d27c"/>
 <polygon points="19.1,550.4 26.6,556.9 26.6,586.4 19.1,581.6" fill="#fbe4a4"/>
 <path d="M30,588.4 Q30.5,577 39,574.5 L42,574.5 Q50.3,577 50.3,588.4Z" fill="#4f9068"/>
 <path d="M37.5,575 L40,579 L42,575Z" fill="#e8eef0"/>
 <circle cx="39.3" cy="567.5" r="6.3" fill="#c9a07a"/>
 <path d="M32.8,566 Q32,559.5 39.5,559.8 Q46.5,560 46,567 Q45,571 43,573 Q44,567 41.5,565 Q37,565.5 33.5,567.5Z" fill="#3a3634"/>
 </svg>
<div class="lbl" style="left:0;width:68px;top:52px">Recycle Bin</div>
<div class="lbl" style="left:68px;width:68px;top:52px">This PC</div>
<div class="lbl" style="left:0;width:68px;top:142px">Office</div>
<div class="lbl" style="left:68px;width:68px;top:142px">Network</div>
<div class="lbl" style="left:0;width:68px;top:232px">Microsoft<br>Edge</div>
<div class="lbl" style="left:68px;width:68px;top:232px">Control<br>Panel</div>
<div class="lbl" style="left:0;width:68px;top:322px">Office2019</div>
<div class="lbl" style="left:0;width:68px;top:412px">setup</div>
<div class="lbl" style="left:0;width:68px;top:502px">Office_201...</div>
<div class="lbl" style="left:0;width:68px;top:592px">mj</div>

<!-- selected ISO icon -->
<div style="position:absolute;left:409px;top:95px;width:67px;height:76px;background:rgba(150,205,250,.33);border:1px dotted rgba(200,230,255,.45)"></div>
<svg class="ic" style="left:420px;top:95px" width="50" height="45" viewBox="420 95 50 45">
 <path d="M428.5,99.5 L449,99.5 L456,106.5 L456,136.5 L428.5,136.5Z" fill="#f7f7f7" stroke="#a9a9a9" stroke-width="1"/>
 <path d="M449,99.5 L449,106.5 L456,106.5Z" fill="#e4e4e4" stroke="#a9a9a9" stroke-width="1"/>
  <defs><linearGradient id="dg1" x1="0" y1="0" x2="1" y2="1"><stop offset="0" stop-color="#e6e6e6"/><stop offset=".45" stop-color="#d0d0d0"/><stop offset=".6" stop-color="#ececec"/><stop offset="1" stop-color="#bcbcbc"/></linearGradient></defs>
 <circle cx="441.8" cy="118.7" r="9.4" fill="url(#dg1)" stroke="#b4b4b4" stroke-width=".6"/>
 <path d="M441.8,118.7 L443.21,109.77 A9.4,9.4 0 0 1 450.73,116.82Z" fill="#c4e2f2" opacity=".7"/>
 <circle cx="441.8" cy="118.7" r="3.38" fill="#e2e2e2" stroke="#c2c2c2" stroke-width=".6"/>
 <circle cx="441.8" cy="118.7" r="1.22" fill="#f6f6f6"/>
</svg>
<div class="lbl" style="left:411px;top:142px;text-align:left;white-space:nowrap">ProPlus2019R</div>
<div class="lbl" style="left:433px;top:156px;text-align:left;white-space:nowrap">etail.img</div>

<div id="menu">
 <div class="mi" style="top:3px;background:#fff;font-weight:bold">Mount</div>
 <div class="mi" style="top:23px">Burn disc image</div>
 <div class="mi" style="top:43px">Scan with Windows Defender...</div>
 <div class="mi" style="top:63px">Share</div>
 <div class="mi" style="top:83px">Open with...</div>
 <div class="sep" style="top:106px"></div>
 <div class="mi" style="top:109px">Give access to</div>
 <div class="mi" style="top:129px">Restore previous versions</div>
 <div class="sep" style="top:152px"></div>
 <div class="mi" style="top:155px">Send to</div>
 <div class="sep" style="top:178px"></div>
 <div class="mi" style="top:181px">Cut</div>
 <div class="mi" style="top:201px">Copy</div>
 <div class="sep" style="top:224px"></div>
 <div class="mi" style="top:227px">Create shortcut</div>
 <div class="mi" style="top:247px">Delete</div>
 <div class="mi" style="top:267px">Rename</div>
 <div class="sep" style="top:291px"></div>
 <div class="mi" style="top:294px">Properties</div>
</div>

<svg class="ic" style="left:450px;top:126px" width="250" height="320" viewBox="450 126 250 320">
 <!-- mount disc -->
 <defs><linearGradient id="dg2" x1="0" y1="0" x2="1" y2="1"><stop offset="0" stop-color="#e6e6e6"/><stop offset=".45" stop-color="#d0d0d0"/><stop offset=".6" stop-color="#ececec"/><stop offset="1" stop-color="#bcbcbc"/></linearGradient></defs>
 <circle cx="466.5" cy="139.5" r="7.6" fill="url(#dg2)" stroke="#b4b4b4" stroke-width=".6"/>
 <path d="M466.5,139.5 L467.64,132.28 A7.6,7.6 0 0 1 473.72,137.98Z" fill="#c4e2f2" opacity=".7"/>
 <circle cx="466.5" cy="139.5" r="2.74" fill="#e2e2e2" stroke="#c2c2c2" stroke-width=".6"/>
 <circle cx="466.5" cy="139.5" r="0.99" fill="#f6f6f6"/>
 <!-- defender -->
 <rect x="459" y="172" width="15" height="15" fill="#0a78d8"/>
 <path d="M461,174.2 L463,173.6 L470,173.6 L472,174.2 L472,179.5 Q471.5,183.5 466.6,186.2 Q461.5,183.5 461,179.5Z" fill="#fff"/>
 <rect x="466" y="173" width="1.3" height="14" fill="#0a78d8"/>
 <rect x="460" y="177.8" width="13" height="1.2" fill="#0a78d8"/>
 <!-- share -->
 <path d="M459.8,198 L459.8,204 L469.5,204 L469.5,202.5" fill="none" stroke="#333" stroke-width="1.1"/>
 <path d="M462.5,202 Q463,196 470,196 L470,193.8 L472.6,197 L470,200.2 L470,198 Q465,198 462.5,202Z" fill="none" stroke="#333" stroke-width="1"/>
 <!-- chevrons -->
 <path d="M683.5,240 L688.5,245.5 L683.5,251" fill="none" stroke="#555" stroke-width="1.1"/>
 <path d="M683.5,286 L688.5,291.5 L683.5,297" fill="none" stroke="#555" stroke-width="1.1"/>
</svg>

<div id="task"></div>
<div id="search"></div>

<svg class="ic" style="left:0;top:657px" width="1024" height="36" viewBox="0 657 1024 36">
 <!-- start -->
 <polygon points="14.1,668.6 20.9,667.8 20.9,674.2 14.1,674.2" fill="#fff"/>
 <polygon points="22,667.6 29,666.8 29,674.2 22,674.2" fill="#fff"/>
 <polygon points="14.1,675.4 20.9,675.4 20.9,681.8 14.1,681" fill="#fff"/>
 <polygon points="22,675.4 29,675.4 29,682.8 22,682" fill="#fff"/>
 <!-- search glass -->
 <circle cx="63.5" cy="673" r="4.5" fill="none" stroke="#333" stroke-width="1.2"/>
 <line x1="60.2" y1="676.3" x2="55" y2="681.5" stroke="#333" stroke-width="1.3"/>
 <!-- cortana -->
 <circle cx="355.7" cy="674.7" r="6" fill="none" stroke="#fff" stroke-width="2"/>
 <!-- task view -->
 <g stroke="#fff" stroke-width="1.1" fill="none">
  <line x1="392.5" y1="667.5" x2="392.5" y2="681.5"/>
  <line x1="401.6" y1="667.5" x2="401.6" y2="681.5"/>
  <line x1="392.5" y1="669.4" x2="401.6" y2="669.4"/>
  <rect x="392.5" y="671.6" width="9.1" height="5.4"/>
  <line x1="405.4" y1="667.5" x2="405.4" y2="681.5" stroke-width="1"/>
 </g>
 <rect x="393" y="677" width="8.2" height="3" fill="#9a9a9a"/>
 <rect x="404" y="671.2" width="2.9" height="2.8" fill="#fff"/>
 <!-- edge -->
 <path transform="translate(436.5,664.8) scale(18.4,19.9)" fill-rule="evenodd" fill="#1a80e6" d="M0,0.43 C0.08,0.15 0.3,0 0.5,0 C0.8,0 1,0.18 1,0.45 L1,0.584 L0.32,0.584 C0.34,0.68 0.45,0.74 0.6,0.74 C0.72,0.74 0.83,0.72 0.9,0.68 L0.9,0.96 C0.8,0.99 0.68,1 0.56,1 C0.28,1 0.1,0.82 0.1,0.55 C0.1,0.42 0.15,0.33 0.24,0.26 C0.13,0.29 0.05,0.36 0,0.43 Z M0.32,0.365 C0.33,0.26 0.4,0.2 0.5,0.2 C0.6,0.2 0.68,0.27 0.69,0.365 Z"/>
 <!-- explorer -->
 <rect x="480.5" y="667" width="7" height="3" fill="#e8b840"/>
 <rect x="480.5" y="669" width="19.5" height="13.5" fill="#f2c85a"/>
 <rect x="480.5" y="671" width="19.5" height="11.5" fill="#f6d67a"/>
 <rect x="486" y="676" width="9" height="7" fill="#3a8ee0"/>
 <rect x="488" y="679" width="5" height="4" fill="#f2c85a"/>
 <!-- store -->
 <path d="M530,669 L530,666.5 Q530,664.2 534,664.2 Q538,664.2 538,666.5 L538,669" fill="none" stroke="#fff" stroke-width="1.2"/>
 <rect x="524" y="669" width="20.5" height="15.5" fill="#fff"/>
 <rect x="530" y="672" width="3.8" height="3.8" fill="#f25022"/>
 <rect x="534.8" y="672" width="3.8" height="3.8" fill="#7fba00"/>
 <rect x="530" y="676.8" width="3.8" height="3.8" fill="#00a4ef"/>
 <rect x="534.8" y="676.8" width="3.8" height="3.8" fill="#ffb900"/>
 <!-- mail -->
 <polygon points="568,672 579,664.8 590,672 590,685 568,685" fill="#1e78cc"/>
 <polygon points="568,672 590,672 590,685 568,685" fill="#2ea6ec"/>
 <polygon points="569,671.5 589,671.5 579,677.5" fill="#f0f4f8"/>
 <!-- tray chevron -->
 <path d="M836.5,678 L841.5,673 L846.5,678" fill="none" stroke="#fff" stroke-width="1.1"/>
 <!-- battery/plug -->
 <rect x="860" y="673" width="11" height="6.5" fill="none" stroke="#fff" stroke-width="1.1"/>
 <rect x="861.5" y="674.5" width="8" height="3.5" fill="#fff"/>
 <rect x="857" y="670" width="1" height="3" fill="#fff"/><rect x="859" y="670" width="1" height="3" fill="#fff"/>
 <rect x="856" y="672.5" width="5" height="3" fill="#fff"/>
 <!-- network -->
 <rect x="882" y="670.5" width="11" height="8" fill="none" stroke="#fff" stroke-width="1.1"/>
 <rect x="878.5" y="669" width="4" height="5.5" fill="none" stroke="#fff" stroke-width="1"/>
 <line x1="887.5" y1="678.5" x2="887.5" y2="681" stroke="#fff" stroke-width="1"/>
 <line x1="884" y1="681" x2="891" y2="681" stroke="#fff" stroke-width="1"/>
 <line x1="880.5" y1="674.5" x2="880.5" y2="681" stroke="#fff" stroke-width="1"/>
 <!-- volume -->
 <path d="M899.5,672.5 L902,672.5 L905.5,669.5 L905.5,680.5 L902,677.5 L899.5,677.5Z" fill="none" stroke="#fff" stroke-width="1"/>
 <path d="M908,672.5 Q909.5,675 908,677.5" fill="none" stroke="#fff" stroke-width="1"/>
 <path d="M910.5,670.5 Q913,675 910.5,679.5" fill="none" stroke="#fff" stroke-width="1"/>
 <path d="M913,669 Q916.5,675 913,681" fill="none" stroke="#fff" stroke-width="1"/>
 <!-- notification -->
 <path d="M986.5,667.5 L1001.5,667.5 L1001.5,678.5 L995.5,678.5 L993.5,681.5 L991.5,678.5 L986.5,678.5Z" fill="none" stroke="#fff" stroke-width="1.1"/>
 <rect x="1020" y="657" width="1" height="36" fill="#3a4450"/>
</svg>
<div style="position:absolute;left:80px;top:667px;font-size:13px;color:#4a4a4a;letter-spacing:0.05px;white-space:nowrap">Type here to search</div>
<div style="position:absolute;left:918px;width:56px;top:659px;font-size:12.2px;line-height:16px;color:#fff;text-align:center;letter-spacing:-0.6px;white-space:nowrap">5:30 AM<br>5/1/2020</div>

</body></html>
